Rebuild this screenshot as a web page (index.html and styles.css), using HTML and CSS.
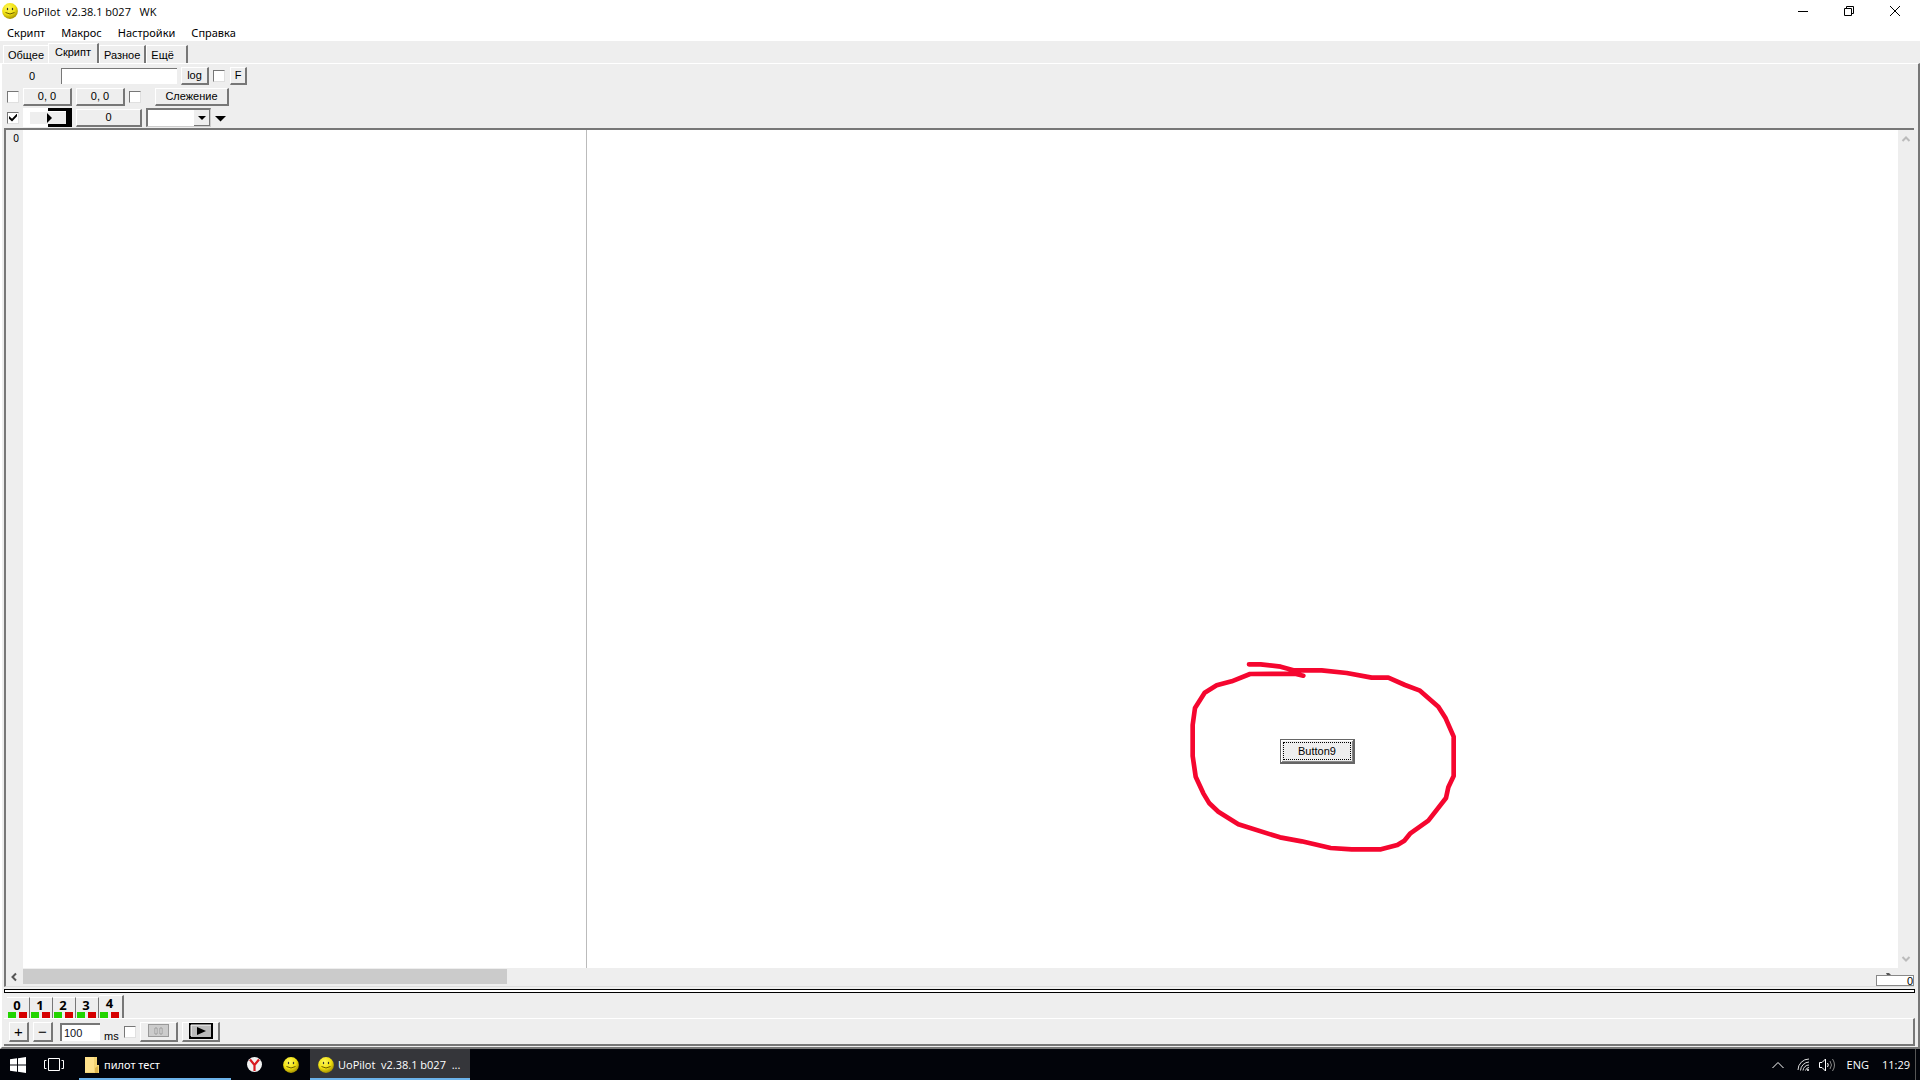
FILE: index.html
```
<!DOCTYPE html>
<html lang="ru">

<head>
    <title>UoPilot</title>
    <meta charset="UTF-8">
    <meta name="viewport" content="width=device-width, initial-scale=1.0">
    <link rel="stylesheet" href="styles.css">
</head>

<body>
    <!-- shared icons -->
    <svg width="0" height="0" class="defs" aria-hidden="true">
        <defs>
            <radialGradient id="face" cx="40%" cy="30%" r="70%">
                <stop offset="0" stop-color="#fff95c" />
                <stop offset="0.6" stop-color="#f0e010" />
                <stop offset="1" stop-color="#a89400" />
            </radialGradient>
            <symbol id="smiley" viewBox="0 0 16 16">
                <circle cx="8" cy="8" r="7.9" fill="url(#face)" />
                <ellipse cx="5.5" cy="6" rx="0.7" ry="1.2" fill="#333" />
                <ellipse cx="10.5" cy="6" rx="0.7" ry="1.2" fill="#333" />
                <path d="M3.5 9.5Q8 12.5 12.5 9.5" fill="none" stroke="#6b5c00" />
            </symbol>
        </defs>
    </svg>

    <header class="titlebar">
        <svg class="app-icon"><use href="#smiley" /></svg>
        <span class="title">UoPilot&nbsp; v2.38.1 b027&nbsp;&nbsp; WK</span>
        <div class="window-buttons">
            <button aria-label="Свернуть"><svg width="12" height="12"><path d="M1 6.5h10" stroke="#000" /></svg></button>
            <button aria-label="Окно"><svg width="12" height="12" fill="none" stroke="#000"><path d="M1.5 3.5h7v7h-7zM3.5 3.5v-2h7v7h-2" /></svg></button>
            <button aria-label="Закрыть"><svg width="12" height="12"><path d="M1 1l10 10M11 1L1 11" stroke="#000" /></svg></button>
        </div>
    </header>

    <nav class="menu">
        <a href="#">Скрипт</a>
        <a href="#">Макрос</a>
        <a href="#">Настройки</a>
        <a href="#">Справка</a>
    </nav>

    <div class="tabs">
        <button class="tab first">Общее</button>
        <button class="tab active">Скрипт</button>
        <button class="tab">Разное</button>
        <button class="tab last">Ещё</button>
    </div>

    <main class="panel">
        <div class="toolbar">
            <div class="row">
                <span class="counter">0</span>
                <input type="text" class="log-text" aria-label="log">
                <button class="btn log-btn">log</button>
                <input type="checkbox" aria-label="log on">
                <button class="btn f-btn">F</button>
            </div>
            <div class="row">
                <input type="checkbox" aria-label="0, 0">
                <button class="btn coord">0, 0</button>
                <button class="btn coord">0, 0</button>
                <input type="checkbox" aria-label="0, 0">
                <button class="btn watch">Слежение</button>
            </div>
            <div class="row">
                <input type="checkbox" aria-label="Цвет" checked>
                <button class="run-btn" aria-label="Старт">
                    <svg width="49" height="19">
                        <rect width="49" height="19" fill="#fff" />
                        <rect x="7" y="4" width="36" height="12" fill="#eee" />
                        <path d="M25 0h24v19H25v-3h18V3H25z" fill="#000" />
                        <path d="M24 5l5 5l-5 5z" fill="#000" />
                    </svg>
                </button>
                <button class="btn color-btn">0</button>
                <div class="combo">
                    <select aria-label="Окно"><option></option></select>
                    <span class="combo-arrow"><svg width="8" height="4"><path d="M0 0h8l-4 4z" /></svg></span>
                </div>
                <button class="drop" aria-label="Ещё"><svg width="11" height="6"><path d="M0 0h11l-5.500 5.500z" /></svg></button>
            </div>
        </div>

        <section class="editor">
            <div class="editor-body">
                <div class="gutter">0</div>
                <div class="code"></div>
                <div class="code right"></div>
                <div class="vscroll">
                    <svg width="10" height="8"><path d="M1.500 6L5 2.500L8.500 6" /></svg>
                    <svg width="10" height="8"><path d="M1.500 2L5 5.500L8.500 2" /></svg>
                </div>
            </div>
            <div class="hscroll">
                <svg width="8" height="10"><path d="M6 1.500L2.500 5L6 8.500" /></svg>
                <div class="thumb"></div>
                <div class="position">
                    <svg width="5" height="2"><path d="M0 0h3l2 2H1z" /></svg>
                    <input type="text" value="0" aria-label="Строка">
                </div>
            </div>
            <button class="button9"><span>Button9</span></button>
            <svg class="mark" viewBox="0 0 930 630">
                <path d="M237 43H272L332 50L370 61H455L530 69L605 83H655L705 105L750 122L805 170L827 205L851 260V378L835 412L828 444L775 512L720 551L703 572L682 585L633 598H545L482 594L395 574L330 562L205 523L145 485L118 460L100 430L77 380L68 318V225L75 174L104 128L140 106L185 94L240 72L375 71L400 77" />
            </svg>
        </section>

        <div class="splitter"></div>

        <div class="script-tabs">
            <button class="script-tab">0<i></i></button>
            <button class="script-tab">1<i></i></button>
            <button class="script-tab">2<i></i></button>
            <button class="script-tab">3<i></i></button>
            <button class="script-tab active">4<i></i></button>
        </div>

        <div class="controls">
            <button class="btn square">+</button>
            <button class="btn square">−</button>
            <input type="text" class="delay" id="delay" value="100">
            <label for="delay">ms</label>
            <input type="checkbox" aria-label="Пауза">
            <button class="btn wide" aria-label="Пауза">
                <svg width="22" height="14">
                    <rect x="0.500" y="0.500" width="20" height="12" fill="#ccc" stroke="#999" />
                    <path d="M7 4h2v6H7zM12 4h2v6h-2z" fill="#eee" stroke="#999" />
                </svg>
            </button>
            <button class="btn wide" aria-label="Пуск">
                <svg width="24" height="16">
                    <rect x="1" y="1" width="22" height="14" fill="#bbb" stroke="#000" stroke-width="2" />
                    <path d="M2 13V2h20" fill="none" stroke="#fff" />
                    <path d="M8 4l9 4l-9 4z" fill="#000" />
                </svg>
            </button>
        </div>
    </main>

    <footer class="taskbar">
        <button class="start" aria-label="Пуск"><svg width="16" height="16"><path fill="#fff" d="M0 2.300L7 1.300V7.500H0zM8 1.200L16 0V7.500H8zM0 8.500H7V14.700L0 13.700zM8 8.500H16V16L8 14.800z" /></svg></button>
        <button class="task-view" aria-label="Задачи"><svg width="20" height="16" fill="none" stroke="#fff"><path d="M4.500 1.500h11v12h-11zM2.500 3.500h-2v8h2M17.500 3.500h2v8h-2" /></svg></button>
        <button class="task folder">
            <svg width="14" height="16"><path d="M0 0h12v8h2v8H0z" fill="#f5d574" /><path d="M0 0h9v15H0z" fill="#ffe28c" /><path d="M10 16v-5l3-2v7z" fill="#dfb64c" /></svg>
            <span>пилот тест</span>
        </button>
        <button class="pinned yandex" aria-label="Yandex"><svg width="15" height="15"><circle cx="7.500" cy="7.500" r="7.500" fill="#f2f2f2" /><path d="M3 2.500L7.500 8L12 2.500M7.500 7.500V14" fill="none" stroke="#d8191f" stroke-width="2.200" /></svg></button>
        <button class="pinned" aria-label="UoPilot"><svg width="16" height="16"><use href="#smiley" /></svg></button>
        <button class="task current">
            <svg width="16" height="16"><use href="#smiley" /></svg>
            <span>UoPilot&nbsp; v2.38.1 b027&nbsp; ...</span>
        </button>
        <div class="tray">
            <svg width="12" height="8" fill="none" stroke="#fff"><path d="M0.500 7L6 1.500L11.500 7" /></svg>
            <svg width="13" height="13" fill="none" stroke="#ddd"><path d="M1 12A11 11 0 0 1 12 1M3.500 12.500A9 9 0 0 1 12 4M6 12.500A6 6 0 0 1 12 7M8.500 12.500A4 4 0 0 1 12 9.500" /><circle cx="11" cy="12" r="1" fill="#fff" stroke="none" /></svg>
            <svg width="17" height="14" fill="none" stroke="#fff"><path d="M0.500 4.500h2.500l3.500-3.500v12L3 9.500H0.500zM8.500 5q1.500 2 0 4" /><path d="M11 3q3 4 0 8M13.500 1q4 6 0 12" stroke="#888" /></svg>
            <span class="lang">ENG</span>
            <span class="clock">11:29</span>
        </div>
    </footer>
</body>

</html>
```
FILE: styles.css
```
* {
    box-sizing: border-box;
}

body {
    margin: 0;
    height: 100vh;
    display: flex;
    flex-direction: column;
    overflow: hidden;
    background-color: #fff;
    color: #000;
    font-family: "Liberation Sans", Arial, sans-serif;
    font-size: 11px;
}

button,
input,
select {
    font: inherit;
    color: inherit;
    margin: 0;
    padding: 0;
    border: none;
    border-radius: 0;
    background: none;
}

svg {
    display: block;
    flex: none;
}

.defs {
    position: absolute;
}

/* title bar and menu */
.titlebar {
    display: flex;
    align-items: center;
    height: 22px;
    padding-left: 2px;
    font-family: "Open Sans", "Noto Sans", sans-serif;
}

.app-icon {
    width: 16px;
    height: 16px;
}

.title {
    margin-left: 5px;
}

.window-buttons {
    display: flex;
    margin-left: auto;
    padding-right: 2px;
}

.window-buttons button {
    display: flex;
    align-items: center;
    justify-content: center;
    width: 46px;
    height: 20px;
}

.menu {
    display: flex;
    gap: 16px;
    height: 19px;
    padding-left: 7px;
    line-height: 21px;
    font-family: "Noto Sans", sans-serif;
}

.menu a {
    color: #000;
    text-decoration: none;
}

/* main tabs */
.tabs {
    display: flex;
    align-items: flex-end;
    height: 22px;
    padding-left: 3px;
    background-color: #eee;
}

.tab {
    height: 18px;
    padding: 0 4px;
    border-top: 1px solid #fff;
    border-left: 1px solid #fff;
    border-right: 2px solid #777;
}

.tab.first {
    border-right: none;
    width: 45px;
}

.tab.active {
    height: 20px;
    width: 51px;
    padding-bottom: 4px;
}

.tab.last {
    width: 42px;
    padding-right: 16px;
}

.panel {
    flex: 1;
    min-height: 0;
    display: flex;
    flex-direction: column;
    padding: 1px 3px 1px 2px;
    background-color: #eee;
    border-top: 1px solid #fff;
    border-left: 2px solid #fff;
    border-right: 2px solid #777;
    border-bottom: 2px solid #777;
}

/* toolbar */
.toolbar {
    height: 63px;
}

.row {
    display: flex;
    align-items: center;
    gap: 4px;
    height: 21px;
    padding-left: 3px;
}

.btn {
    display: flex;
    align-items: center;
    justify-content: center;
    height: 18px;
    background-color: #eee;
    border: 1px solid #fff;
    border-right: 2px solid #777;
    border-bottom: 2px solid #777;
}

input[type=checkbox] {
    appearance: none;
    flex: none;
    width: 12px;
    height: 12px;
    background-color: #fff;
    border: 1px solid #e0e0e0;
    border-top: 1px solid #777;
    border-left: 1px solid #777;
}

input[type=checkbox]:checked::before {
    content: "";
    display: block;
    width: 8px;
    height: 8px;
    margin: 1px;
    background-color: #000;
    clip-path: polygon(0 30%, 38% 65%, 100% 0, 100% 35%, 38% 100%, 0 65%);
}

.counter {
    width: 50px;
    text-align: center;
}

.log-text {
    width: 116px;
    height: 16px;
    background-color: #fff;
    border-top: 1px solid #777;
    border-left: 1px solid #777;
}

.log-btn {
    width: 28px;
}

.f-btn {
    width: 17px;
    margin-left: 1px;
}

.coord {
    width: 49px;
}

.watch {
    width: 74px;
    margin-left: 10px;
}

.run-btn {
    width: 49px;
}

.color-btn {
    width: 66px;
}

.combo {
    position: relative;
    width: 65px;
    height: 19px;
}

.combo select {
    appearance: none;
    width: 100%;
    height: 100%;
    background-color: #fff;
    border: 2px solid #777;
    border-right: 1px solid #ccc;
    border-bottom: 1px solid #ccc;
}

.combo-arrow {
    position: absolute;
    top: 2px;
    right: 1px;
    display: flex;
    align-items: center;
    justify-content: center;
    width: 16px;
    height: 16px;
    background-color: #eee;
    border-right: 1px solid #777;
    border-bottom: 1px solid #777;
    pointer-events: none;
}

.drop {
    padding-top: 3px;
}

/* editor */
.editor {
    flex: 1;
    min-height: 0;
    position: relative;
    display: flex;
    flex-direction: column;
    margin-right: 1px;
    border-top: 2px solid #777;
    border-left: 2px solid #777;
    border-bottom: 1px solid #ddd;
}

.editor-body {
    flex: 1;
    display: flex;
    background-color: #fff;
}

.gutter {
    width: 17px;
    padding: 2px 4px 0 0;
    background-color: #eee;
    text-align: right;
    font-family: "Noto Sans", sans-serif;
    font-size: 10px;
    line-height: 12px;
}

.code {
    width: 564px;
    border-right: 1px solid #bbb;
}

.code.right {
    flex: 1;
    border: none;
}

.vscroll {
    display: flex;
    flex-direction: column;
    justify-content: space-between;
    align-items: center;
    width: 16px;
    padding: 5px 0;
    background-color: #eee;
}

.vscroll path {
    fill: none;
    stroke: #bbb;
    stroke-width: 2;
}

.hscroll {
    display: flex;
    align-items: center;
    height: 18px;
    padding-left: 4px;
    background-color: #eee;
}

.hscroll path {
    fill: none;
    stroke: #555;
    stroke-width: 2;
}

.thumb {
    width: 484px;
    height: 15px;
    margin: 0 auto 2px 5px;
    background-color: #cbcbcb;
}

.position {
    align-self: flex-end;
    width: 38px;
}

.position svg {
    margin-left: 10px;
}

.position path {
    fill: #555;
    stroke: none;
}

.position input {
    display: block;
    width: 100%;
    height: 11px;
    background-color: #fff;
    border: 1px solid #888;
    text-align: right;
    line-height: 9px;
}

.button9 {
    position: absolute;
    top: 609px;
    left: 1274px;
    width: 75px;
    height: 25px;
    padding: 2px;
    background-color: #eee;
    border: 1px solid #666;
    border-right-width: 2px;
    border-bottom-width: 2px;
    box-shadow: inset 1px 1px #fff, inset -1px -1px #888;
}

.button9 span {
    display: block;
    height: 18px;
    line-height: 16px;
    border: 1px dotted #000;
}

.mark {
    position: absolute;
    top: 520px;
    left: 1164px;
    width: 310px;
    height: 210px;
    pointer-events: none;
}

.mark path {
    fill: none;
    stroke: #f5062f;
    stroke-width: 14;
    stroke-linejoin: round;
    stroke-linecap: round;
}

.splitter {
    height: 4px;
    margin-top: 2px;
    background-color: #fff;
    border: 1px solid #000;
}

/* script tabs and bottom controls */
.script-tabs {
    display: flex;
    align-items: flex-end;
    height: 25px;
    padding-left: 3px;
}

.script-tab {
    display: flex;
    flex-direction: column;
    justify-content: space-between;
    width: 23px;
    height: 21px;
    padding-left: 1px;
    border-top: 1px solid #fff;
    border-right: 1px solid #777;
    font-family: "Noto Sans", sans-serif;
    font-size: 13px;
    font-weight: bold;
    line-height: 14px;
    padding-right: 3px;
}

.script-tab i {
    width: 19px;
    height: 6px;
    background: linear-gradient(to right, #22d400 8px, #eee 8px, #eee 11px, #d60000 11px);
}

.script-tab.active {
    width: 25px;
    height: 23px;
    border-right: 2px solid #777;
}

.controls {
    display: flex;
    align-items: center;
    gap: 4px;
    height: 28px;
    padding-left: 5px;
    border-top: 1px solid #fff;
    border-right: 2px solid #777;
    border-bottom: 2px solid #777;
}

.controls .btn {
    height: 20px;
}

.square {
    width: 20px;
    font-size: 15px;
}

.delay {
    width: 40px;
    height: 18px;
    margin-left: 3px;
    padding-left: 2px;
    background-color: #fff;
    border-top: 2px solid #777;
    border-left: 2px solid #777;
    color: #112;
}

.controls label {
    width: 16px;
    padding-top: 8px;
}

.wide {
    width: 38px;
}

/* taskbar */
.taskbar {
    display: flex;
    align-items: center;
    height: 31px;
    background-color: #02040a;
    color: #fff;
    font-family: "Noto Sans", sans-serif;
}

.start {
    margin: 0 18px 0 10px;
}

.task-view {
    margin-right: 15px;
}

.task {
    display: flex;
    align-items: center;
    gap: 5px;
    height: 31px;
    padding-top: 2px;
    padding-left: 6px;
    border-bottom: 2px solid #6cb3ea;
}

.folder {
    width: 152px;
}

.yandex {
    margin-left: 16px;
}

.pinned {
    margin-right: 21px;
}

.yandex + .pinned {
    margin-right: 11px;
}

.current {
    width: 160px;
    gap: 4px;
    padding-left: 8px;
    background-color: #35363a;
    font-family: "Open Sans", "Noto Sans", sans-serif;
}

.tray {
    display: flex;
    align-items: center;
    gap: 13px;
    height: 31px;
    margin: 0 4px 0 auto;
    padding-right: 5px;
    border-right: 1px solid #555;
    font-family: "Open Sans", "Noto Sans", sans-serif;
}

.tray svg + svg + svg {
    margin-left: -4px;
}

.tray svg + span {
    margin-left: -2px;
}
```
